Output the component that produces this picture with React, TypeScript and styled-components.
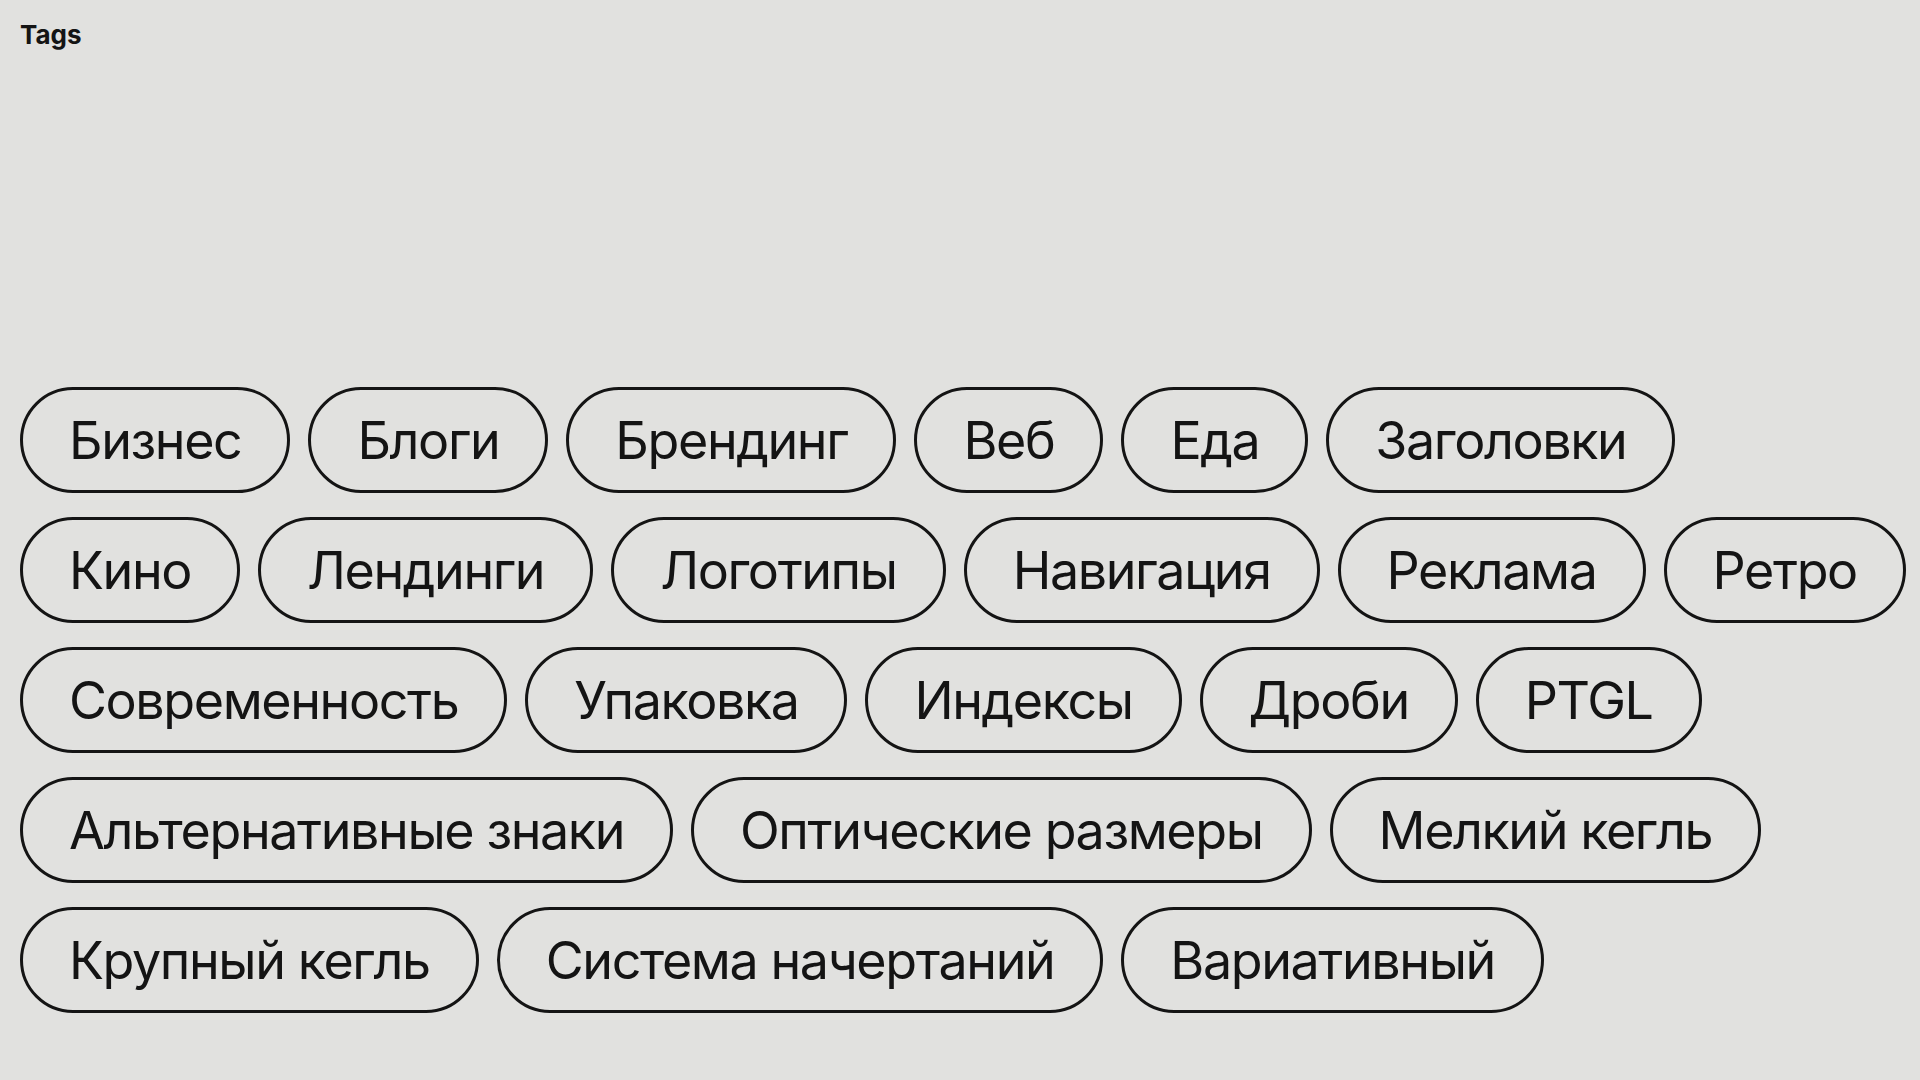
import React from "react";
import styled, { createGlobalStyle } from "styled-components";

const GlobalStyle = createGlobalStyle`
  html, body {
    margin: 0;
    padding: 0;
    background: #e1e1df;
  }
  body {
    font-family: Inter, "Noto Sans", Roboto, sans-serif;
    color: #141414;
    -webkit-font-smoothing: antialiased;
  }
`;

const Page = styled.main`
  box-sizing: border-box;
  width: 1920px;
  min-height: 1080px;
  padding: 20px 20px 0;
`;

const Title = styled.h1`
  margin: 0;
  font-family: Inter, "Noto Sans", sans-serif;
  font-size: 26px;
  line-height: 29px;
  font-weight: 700;
  letter-spacing: 0;
  color: #141414;
`;

const TagList = styled.ul`
  list-style: none;
  margin: 338px 0 0;
  padding: 0;
  display: flex;
  flex-direction: column;
  gap: 24px;
`;

const TagRow = styled.li`
  display: flex;
  gap: 18px;
`;

const Tag = styled.span`
  box-sizing: border-box;
  display: inline-flex;
  align-items: center;
  justify-content: center;
  height: 106px;
  padding: 0 46px;
  border: 3.3px solid #141414;
  border-radius: 999px;
  font-family: Inter, "Noto Sans", sans-serif;
  font-size: 52px;
  font-weight: 400;
  letter-spacing: -1.4px;
  white-space: nowrap;
  color: #141414;
`;

const rows: string[][] = [
  ["Бизнес", "Блоги", "Брендинг", "Веб", "Еда", "Заголовки"],
  ["Кино", "Лендинги", "Логотипы", "Навигация", "Реклама", "Ретро"],
  ["Современность", "Упаковка", "Индексы", "Дроби", "PTGL"],
  ["Альтернативные знаки", "Оптические размеры", "Мелкий кегль"],
  ["Крупный кегль", "Система начертаний", "Вариативный"],
];

export default function App() {
  return (
    <>
      <GlobalStyle />
      <Page>
        <Title>Tags</Title>
        <TagList>
          {rows.map((row, i) => (
            <TagRow key={i}>
              {row.map((t) => (
                <Tag key={t}>{t}</Tag>
              ))}
            </TagRow>
          ))}
        </TagList>
      </Page>
    </>
  );
}
